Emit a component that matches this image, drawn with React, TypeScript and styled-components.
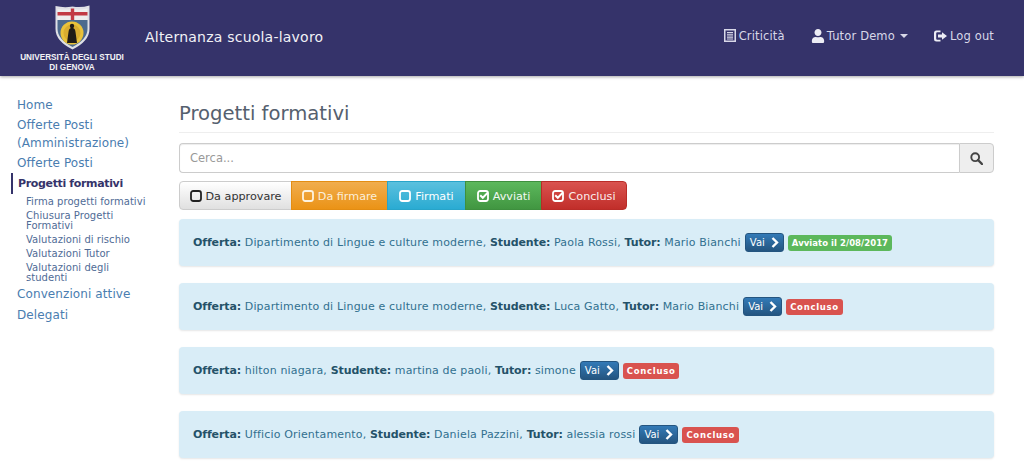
import React from 'react';
import styled, { createGlobalStyle } from 'styled-components';
import { FaUser } from 'react-icons/fa';

const GlobalStyle = createGlobalStyle`
    html, body {
        margin: 0;
        padding: 0;
        background: #fff;
        overflow: hidden;
        height: 464px;
    }
    body {
        font-family: "DejaVu Sans", "Liberation Sans", sans-serif;
        font-size: 12px;
        color: #333;
    }
    * {
        box-sizing: border-box;
    }
`;

const Navbar = styled.header`
    height: 76px;
    background: #35336a;
    box-shadow: 0 1px 3px rgba(0, 0, 0, 0.35);
    display: flex;
    align-items: center;
    padding: 0 30px 0 19px;
    color: #fff;
`;

const LogoBox = styled.div`
    width: 106px;
    height: 76px;
    padding-top: 5px;
    display: flex;
    flex-direction: column;
    align-items: center;
`;

const LogoText = styled.div`
    font-family: "Liberation Sans", sans-serif;
    font-size: 8.2px;
    font-weight: 700;
    line-height: 9.5px;
    text-align: center;
    white-space: nowrap;
    color: #f2f2f6;
    margin-top: 3px;
`;

const Brand = styled.div`
    margin-left: 20px;
    margin-top: -2px;
    font-size: 14px;
    color: #f1f1f6;
    letter-spacing: 0.22px;
    flex: 1;
`;

const NavLinks = styled.nav`
    display: flex;
    align-items: center;
    gap: 26px;
    margin-top: -5px;
`;

const NavLink = styled.a`
    display: flex;
    align-items: center;
    gap: 3px;
    color: #d8d8e8;
    font-size: 11.5px;
    letter-spacing: 0.15px;
    svg {
        flex: none;
    }
`;

const UserLink = styled(NavLink)`
    gap: 2px;
`;

const Caret = styled.span`
    display: inline-block;
    margin-left: 3px;
    border-top: 4px solid #d8d8e8;
    border-left: 4px solid transparent;
    border-right: 4px solid transparent;
`;

const Body = styled.div`
    display: flex;
`;

const Sidebar = styled.aside`
    width: 179px;
    flex: none;
    padding: 19px 28px 0 11px;
`;

const SideLink = styled.a`
    display: block;
    padding: 1px 0 1px 6px;
    color: #4a7db0;
    font-size: 12px;
    line-height: 18px;
    letter-spacing: 0.1px;
`;

const ActiveLink = styled(SideLink)`
    border-left: 2px solid #35336a;
    padding: 2px 0 1px 5px;
    color: #35336a;
    font-weight: 700;
    font-size: 11px;
    letter-spacing: -0.35px;
`;

const LastLink = styled(SideLink)`
    margin-top: 1px;
`;

const SubList = styled.div`
    margin: 3px 0 -3px;
`;

const SubLink = styled.a`
    display: block;
    padding: 0 0 4px 15px;
    color: #4f6b96;
    font-size: 10px;
    line-height: 10px;
    letter-spacing: 0.05px;
`;

const Main = styled.main`
    flex: 1;
    padding: 0 30px 0 0;
`;

const PageTitle = styled.h1`
    margin: 25px 0 10px;
    padding-bottom: 5px;
    border-bottom: 1px solid #eee;
    font-size: 19.6px;
    line-height: 26px;
    font-weight: 500;
    color: #55606e;
`;

const SearchGroup = styled.div`
    display: flex;
    height: 30px;
`;

const SearchInput = styled.div`
    flex: 1;
    border: 1px solid #ccc;
    border-right: 0;
    border-radius: 4px 0 0 4px;
    box-shadow: inset 0 1px 1px rgba(0, 0, 0, 0.075);
    padding: 0 10px;
    line-height: 28px;
    color: #999;
    font-size: 11.5px;
`;

const SearchButton = styled.div`
    width: 35px;
    border: 1px solid #ccc;
    border-radius: 0 4px 4px 0;
    background: #eee;
    color: #444;
    display: flex;
    align-items: center;
    justify-content: center;
`;

const FilterGroup = styled.div`
    display: flex;
    margin: 8px 0 9px;
`;

const filterColors = {
    default: { top: '#fff', bottom: '#e0e0e0', border: '#ccc', text: '#333', icon: '#222' },
    warning: { top: '#f0ad4e', bottom: '#eb9316', border: '#e38d13', text: '#fbeeda', icon: '#fdf3e0' },
    info: { top: '#5bc0de', bottom: '#2aabd2', border: '#28a4c9', text: '#fff', icon: '#fff' },
    success: { top: '#5cb85c', bottom: '#419641', border: '#3e8f3e', text: '#f2f8f2', icon: '#fff' },
    danger: { top: '#d9534f', bottom: '#c12e2a', border: '#b92c28', text: '#fbeeee', icon: '#fff' },
};

type Tone = keyof typeof filterColors;

const FilterButton = styled.div<{ $tone: Tone; $width: number }>`
    width: ${(p) => p.$width}px;
    height: 29px;
    padding-top: 1px;
    display: flex;
    align-items: center;
    justify-content: center;
    gap: 4px;
    font-size: 11.2px;
    color: ${(p) => filterColors[p.$tone].text};
    background: linear-gradient(${(p) => filterColors[p.$tone].top}, ${(p) => filterColors[p.$tone].bottom});
    border: 1px solid ${(p) => filterColors[p.$tone].border};
    margin-left: -1px;
    &:first-child {
        margin-left: 0;
        border-radius: 4px 0 0 4px;
    }
    &:last-child {
        border-radius: 0 4px 4px 0;
    }
`;

const Alert = styled.div`
    height: 47px;
    margin-bottom: 17px;
    padding: 0 14px;
    display: flex;
    align-items: center;
    gap: 4px;
    background: #d9edf7;
    border-radius: 4px;
    box-shadow: 0 1px 2px rgba(0, 0, 0, 0.1);
    color: #31708f;
    font-size: 11px;
    letter-spacing: 0.16px;
    white-space: pre;
`;

const AlertText = styled.span`
    b {
        color: #245269;
        letter-spacing: -0.1px;
    }
`;

const GoButton = styled.span`
    width: 39px;
    height: 19px;
    display: flex;
    align-items: center;
    justify-content: center;
    gap: 6px;
    background: linear-gradient(#337ab7, #245580);
    border: 1px solid #245580;
    border-radius: 3px;
    color: #fff;
    font-size: 10px;
    letter-spacing: 0;
`;

const Label = styled.span<{ $color: string; $tracking: number }>`
    margin-top: 1px;
    height: 16px;
    padding: 0 4px;
    display: flex;
    align-items: center;
    background: ${(p) => p.$color};
    border-radius: 3px;
    color: #fff;
    font-size: 8.5px;
    font-weight: 700;
    letter-spacing: ${(p) => p.$tracking}px;
`;

const ListIcon = () => (
    <svg width="12" height="13" viewBox="0 0 12 13">
        <path fillRule="evenodd" fill="#d8d8e8" d="M0 0h12v13H0zM1.5 1.5v10h9v-10zM3 3h6v1.2H3zM3 5.3h6v1.2H3zM3 7.6h6v1.2H3zM3 9.6h6v1H3z" />
    </svg>
);

const LogoutIcon = () => (
    <svg width="13" height="12" viewBox="0 0 13 12">
        <path fill="#ececf4" d="M2.5 0.5H6.5V2.3H3.2a1 1 0 0 0-1 1v5.400a1 1 0 0 0 1 1h3.300v1.800H2.500A2.500 2.500 0 0 1 0 9V3A2.500 2.500 0 0 1 2.500 0.500zM8 2.200 13 6 8 9.800V7.500H4V4.500h4z" />
    </svg>
);

const CheckBox = ({ checked, color }: { checked: boolean; color: string }) => (
    <svg width="12" height="12" viewBox="0 0 12 12">
        <rect x="1" y="1" width="10" height="10" rx="2.2" fill="none" stroke={color} strokeWidth="1.8" />
        {checked && <path d="M3.2 5.2 5.8 7.8 11 2.4" fill="none" stroke={color} strokeWidth="2" />}
    </svg>
);

const Chevron = () => (
    <svg width="8" height="11" viewBox="0 0 8 11">
        <path d="M1.5 1 6 5.5 1.500 10" fill="none" stroke="#fff" strokeWidth="2.4" />
    </svg>
);

const SearchIcon = () => (
    <svg width="13" height="13" viewBox="0 0 13 13">
        <circle cx="5.2" cy="5.2" r="3.9" fill="none" stroke="#444" strokeWidth="1.9" />
        <path d="M8 8 12 12" stroke="#444" strokeWidth="2.4" strokeLinecap="round" />
    </svg>
);

const Shield = () => (
    <svg width="35" height="45" viewBox="0 0 35 45">
        <path fill="#dfe0e6" d="M0.5 1 Q9 3 17.5 1.5 Q26 3 34.5 0.5 V24 Q34.5 36 17.5 44.5 Q0.5 36 0.5 24Z" />
        <path fill="#eeeeee" d="M2.5 4 Q10 5 17.5 4 Q25 5 32.5 3.5 V15 H2.5Z" />
        <rect x="2.5" y="7" width="30" height="3.5" fill="#c23a44" />
        <rect x="15.8" y="3.5" width="3.4" height="11.5" fill="#c23a44" />
        <path fill="#4c6a8e" d="M2.5 15 H32.5 V24 Q32.5 34 17.5 42 Q2.5 34 2.5 24Z" />
        <circle cx="17" cy="28" r="11.5" fill="#e9c23a" />
        <circle cx="17" cy="28" r="8.5" fill="#d9ad30" />
        <path fill="#1f1b16" d="M12 38 L13.5 27 Q13.8 23.5 16 23 H18 Q20.2 23.5 20.5 27 L22 38Z" />
        <circle cx="17" cy="21" r="2.2" fill="#1f1b16" />
    </svg>
);

const sideItems = ['Home', 'Offerte Posti (Amministrazione)', 'Offerte Posti'];
const subItems = ['Firma progetti formativi', 'Chiusura Progetti Formativi', 'Valutazioni di rischio', 'Valutazioni Tutor', 'Valutazioni degli studenti'];

const filters: { label: string; tone: Tone; width: number; checked: boolean }[] = [
    { label: 'Da approvare', tone: 'default', width: 113, checked: false },
    { label: 'Da firmare', tone: 'warning', width: 97, checked: false },
    { label: 'Firmati', tone: 'info', width: 79, checked: false },
    { label: 'Avviati', tone: 'success', width: 77, checked: true },
    { label: 'Conclusi', tone: 'danger', width: 86, checked: true },
];

const offers = [
    { offer: 'Dipartimento di Lingue e culture moderne', student: 'Paola Rossi', tutor: 'Mario Bianchi', label: 'Avviato il 2/08/2017', color: '#5cb85c', tracking: 0.05 },
    { offer: 'Dipartimento di Lingue e culture moderne', student: 'Luca Gatto', tutor: 'Mario Bianchi', label: 'Concluso', color: '#d9534f', tracking: 0.7 },
    { offer: 'hilton niagara', student: 'martina de paoli', tutor: 'simone', label: 'Concluso', color: '#d9534f', tracking: 0.7 },
    { offer: 'Ufficio Orientamento', student: 'Daniela Pazzini', tutor: 'alessia rossi', label: 'Concluso', color: '#d9534f', tracking: 0.7 },
];

export default function App() {
    return (
        <>
            <GlobalStyle />
            <Navbar>
                <LogoBox>
                    <Shield />
                    <LogoText>UNIVERSITÀ DEGLI STUDI<br />DI GENOVA</LogoText>
                </LogoBox>
                <Brand>Alternanza scuola-lavoro</Brand>
                <NavLinks>
                    <NavLink><ListIcon />Criticità</NavLink>
                    <UserLink><FaUser size={14} color="#ececf4" />Tutor Demo<Caret /></UserLink>
                    <NavLink><LogoutIcon />Log out</NavLink>
                </NavLinks>
            </Navbar>
            <Body>
                <Sidebar>
                    {sideItems.map((item) => <SideLink key={item}>{item}</SideLink>)}
                    <ActiveLink>Progetti formativi</ActiveLink>
                    <SubList>
                        {subItems.map((item) => <SubLink key={item}>{item}</SubLink>)}
                    </SubList>
                    <SideLink>Convenzioni attive</SideLink>
                    <LastLink>Delegati</LastLink>
                </Sidebar>
                <Main>
                    <PageTitle>Progetti formativi</PageTitle>
                    <SearchGroup>
                        <SearchInput>Cerca...</SearchInput>
                        <SearchButton><SearchIcon /></SearchButton>
                    </SearchGroup>
                    <FilterGroup>
                        {filters.map((f) => (
                            <FilterButton key={f.label} $tone={f.tone} $width={f.width}>
                                <CheckBox checked={f.checked} color={filterColors[f.tone].icon} />
                                {f.label}
                            </FilterButton>
                        ))}
                    </FilterGroup>
                    {offers.map((o) => (
                        <Alert key={o.student}>
                            <AlertText><b>Offerta:</b> {o.offer}, <b>Studente:</b> {o.student}, <b>Tutor:</b> {o.tutor}</AlertText>
                            <GoButton>Vai<Chevron /></GoButton>
                            <Label $color={o.color} $tracking={o.tracking}>{o.label}</Label>
                        </Alert>
                    ))}
                </Main>
            </Body>
        </>
    );
}
